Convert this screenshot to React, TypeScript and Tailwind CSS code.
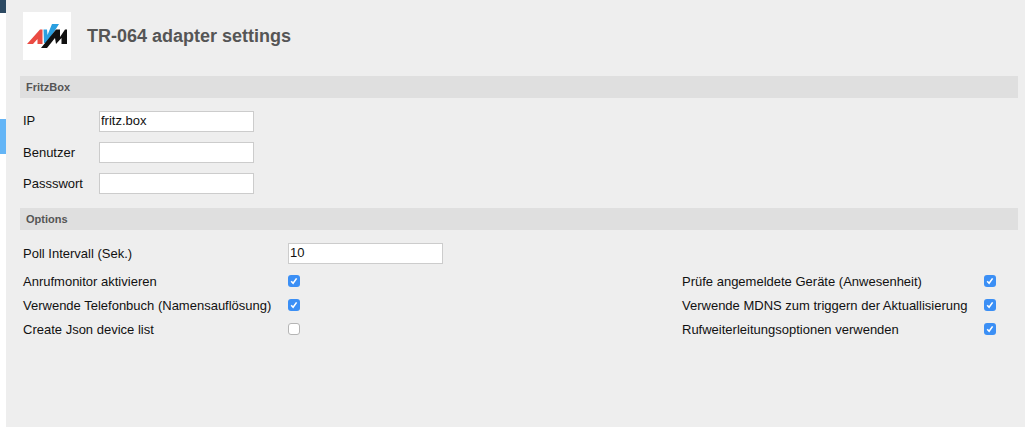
const labelFont = "font-['Liberation_Sans',Arial,sans-serif]";

function Check({ on }: { on: boolean }) {
  if (!on) {
    return <div className="h-[12px] w-[12px] rounded-[3px] border border-[#b5b5b5] bg-white" />;
  }
  return (
    <div className="flex h-[12px] w-[12px] items-center justify-center rounded-[3px] bg-[#3b8ff5]">
      <svg width="8" height="8" viewBox="0 0 8 8" fill="none">
        <path d="M1.2 4.2 L3.1 6.2 L6.6 1.4" stroke="#fff" strokeWidth="1.6" />
      </svg>
    </div>
  );
}

function Section({ title }: { title: string }) {
  return (
    <div className="flex h-[22px] items-center bg-[#dfdfdf] pl-[6px] text-[11px] font-bold text-[#555]">
      {title}
    </div>
  );
}

function Field({ label, value, labelClass }: { label: string; value?: string; labelClass?: string }) {
  return (
    <div className="flex h-[21px] items-center">
      <label className={`w-[76px] text-[13px] text-[#111] ${labelClass ?? ""}`}>{label}</label>
      <input
        readOnly
        value={value ?? ""}
        className="h-[21px] w-[155px] border border-[#ccc] bg-white pb-[2px] pl-[1px] text-[13px] text-[#111] outline-none"
      />
    </div>
  );
}

function CheckRow({ label, on, width }: { label: string; on: boolean; width: string }) {
  return (
    <div className="flex h-[24px] items-center text-[13px] text-[#111]">
      <span className={`${width} pt-[1px]`}>{label}</span>
      <Check on={on} />
    </div>
  );
}

export default function App() {
  return (
    <div className={`flex h-[427px] w-[1025px] overflow-hidden bg-white ${labelFont}`}>
      <div className="flex w-[6px] flex-col">
        <div className="h-[13px] bg-[#2d4a63]" />
        <div className="h-[106px]" />
        <div className="h-[35px] bg-[#64b5f6]" />
      </div>
      <div className="flex-1 bg-[#eeeeee] pl-[14px] pr-[7px]">
        <div className="flex h-[76px] items-start pl-[3px] pt-[12px]">
          <svg width="48" height="48" viewBox="0 0 48 48" className="bg-white">
            <path d="M4 32 L17 17.5 L19.5 17.5 L19.5 32 L14.5 32 L14.5 27 L10 32 Z" fill="#ea4b43" />
            <path d="M20.5 17.5 L24 17.5 L24.5 23 L29 12 L36 12 L24 31 L21 31 Z" fill="#2a9fe0" />
            <path d="M18 36 L33 17.5 L37 17.5 L37 25 L42 17.5 L44 17.5 L44 32 L38.5 32 L38.5 26 L33 32 L32 26 L24 36 Z" fill="#111" />
          </svg>
          <h1 className="ml-[16px] mt-[13px] text-[18px] leading-[22px] font-bold text-[#555]">TR-064 adapter settings</h1>
        </div>
        <Section title="FritzBox" />
        <div className="flex flex-col gap-[10px] pl-[3px] pt-[13px]">
          <Field label="IP" value="fritz.box" labelClass="pb-[1px]" />
          <Field label="Benutzer" />
          <Field label="Passswort" />
        </div>
        <div className="mt-[14px]">
          <Section title="Options" />
        </div>
        <div className="pl-[3px] pt-[13px]">
          <div className="flex h-[21px] items-center">
            <label className="w-[265px] text-[13px] text-[#111]">Poll Intervall (Sek.)</label>
            <input
              readOnly
              value="10"
              className="h-[21px] w-[155px] border border-[#ccc] bg-white pb-[2px] pl-[1px] text-[13px] text-[#111] outline-none"
            />
          </div>
          <div className="mt-[5px] flex">
            <div className="w-[659px]">
              <CheckRow label="Anrufmonitor aktivieren" on width="w-[265px]" />
              <CheckRow label="Verwende Telefonbuch (Namensauflösung)" on width="w-[265px]" />
              <CheckRow label="Create Json device list" on={false} width="w-[265px]" />
            </div>
            <div>
              <CheckRow label="Prüfe angemeldete Geräte (Anwesenheit)" on width="w-[302px]" />
              <CheckRow label="Verwende MDNS zum triggern der Aktuallisierung" on width="w-[302px]" />
              <CheckRow label="Rufweiterleitungsoptionen verwenden" on width="w-[302px]" />
            </div>
          </div>
        </div>
      </div>
    </div>
  );
}
